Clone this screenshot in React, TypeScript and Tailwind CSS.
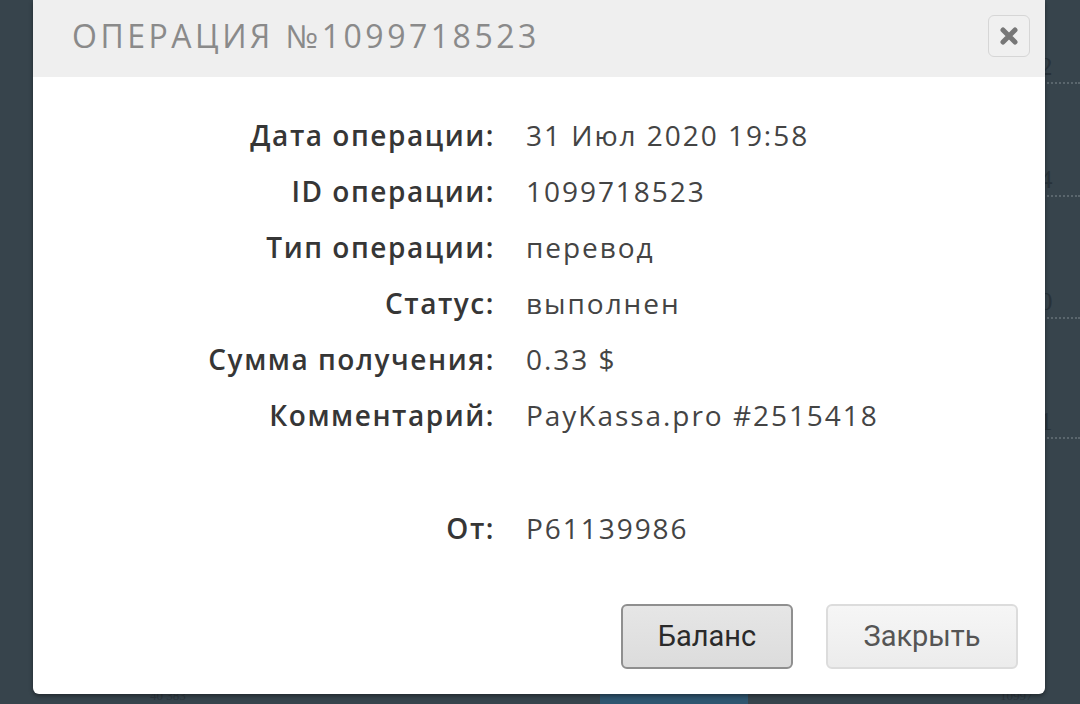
const rows: [string, string][] = [
  ["Дата операции:", "31 Июл 2020 19:58"],
  ["ID операции:", "1099718523"],
  ["Тип операции:", "перевод"],
  ["Статус:", "выполнен"],
  ["Сумма получения:", "0.33 $"],
  ["Комментарий:", "PayKassa.pro #2515418"],
];

const bgRows = [
  { top: "top-[52px]", value: "7 2" },
  { top: "top-[165px]", value: "3 4" },
  { top: "top-[287px]", value: "3 0" },
  { top: "top-[407px]", value: "2 1" },
];

const Row = ({ label, value }: { label: string; value: string }) => (
  <div className="flex h-[56px] items-center">
    <div className="w-[462px] text-right font-semibold tracking-[0.055em] text-[#363636]">{label}</div>
    <div className="pl-[31px] tracking-[0.07em] text-[#444]">{value}</div>
  </div>
);

export default function App() {
  return (
    <div className="relative h-[704px] w-[1080px] overflow-hidden bg-[#37444c] font-['Open_Sans','Liberation_Sans',sans-serif]">
      {/* table behind the overlay */}
      {bgRows.map((r) => (
        <div key={r.value} className={`absolute right-0 ${r.top} w-[60px]`}>
          <div className="font-['Liberation_Serif',serif] text-[26px] leading-[30px] text-[#27323a]">{r.value}</div>
          <div className="border-b-2 border-dotted border-[#5a666d]" />
        </div>
      ))}
      <div className="absolute left-[600px] top-[694px] h-[10px] w-[148px] bg-[#2f5670]" />
      <div className="absolute left-[150px] top-[689px] font-['Liberation_Serif',serif] text-[13px] leading-[14px] text-[#2c363d]">40 383</div>
      <div className="absolute left-[1000px] top-[689px] font-['Liberation_Serif',serif] text-[13px] leading-[14px] text-[#2c363d]">10997</div>

      {/* modal */}
      <div className="absolute left-[33px] top-0 flex h-[694px] w-[1012px] flex-col rounded-b-[6px] bg-white shadow-[0_2px_4px_rgba(0,0,0,0.4)]">
        <div className="flex h-[77px] items-center justify-between bg-[#efefef] pb-[6px] pl-[39px] pr-[15px]">
          <div className="text-[32px] tracking-[0.11em] text-[#8a8a8a]">ОПЕРАЦИЯ №1099718523</div>
          <button className="flex h-[42px] w-[42px] items-center justify-center rounded-[6px] border border-[#d6d6d6] bg-[#f0f0f0]">
            <svg width="20" height="18" viewBox="0 0 20 18">
              <path d="M4 3 L16 15 M16 3 L4 15" stroke="#777" strokeWidth="5" strokeLinecap="round" />
            </svg>
          </button>
        </div>

        <div className="flex flex-col pt-[30px] text-[28px]">
          {rows.map(([l, v]) => (
            <Row key={l} label={l} value={v} />
          ))}
          <div className="h-[57px]" />
          <Row label="От:" value="P61139986" />
        </div>

        <div className="mt-auto flex justify-end gap-[33px] pb-[25px] pr-[27px] font-['Roboto',sans-serif] text-[29px]">
          <button className="h-[65px] w-[172px] rounded-[6px] border-2 border-[#8f8f8f] bg-gradient-to-b from-[#e6e6e6] to-[#dcdcdc] text-[#2a2a2a]">
            Баланс
          </button>
          <button className="h-[65px] w-[192px] rounded-[6px] border-2 border-[#dcdcdc] bg-gradient-to-b from-[#f6f6f6] to-[#ececec] text-[#555]">
            Закрыть
          </button>
        </div>
      </div>
    </div>
  );
}
